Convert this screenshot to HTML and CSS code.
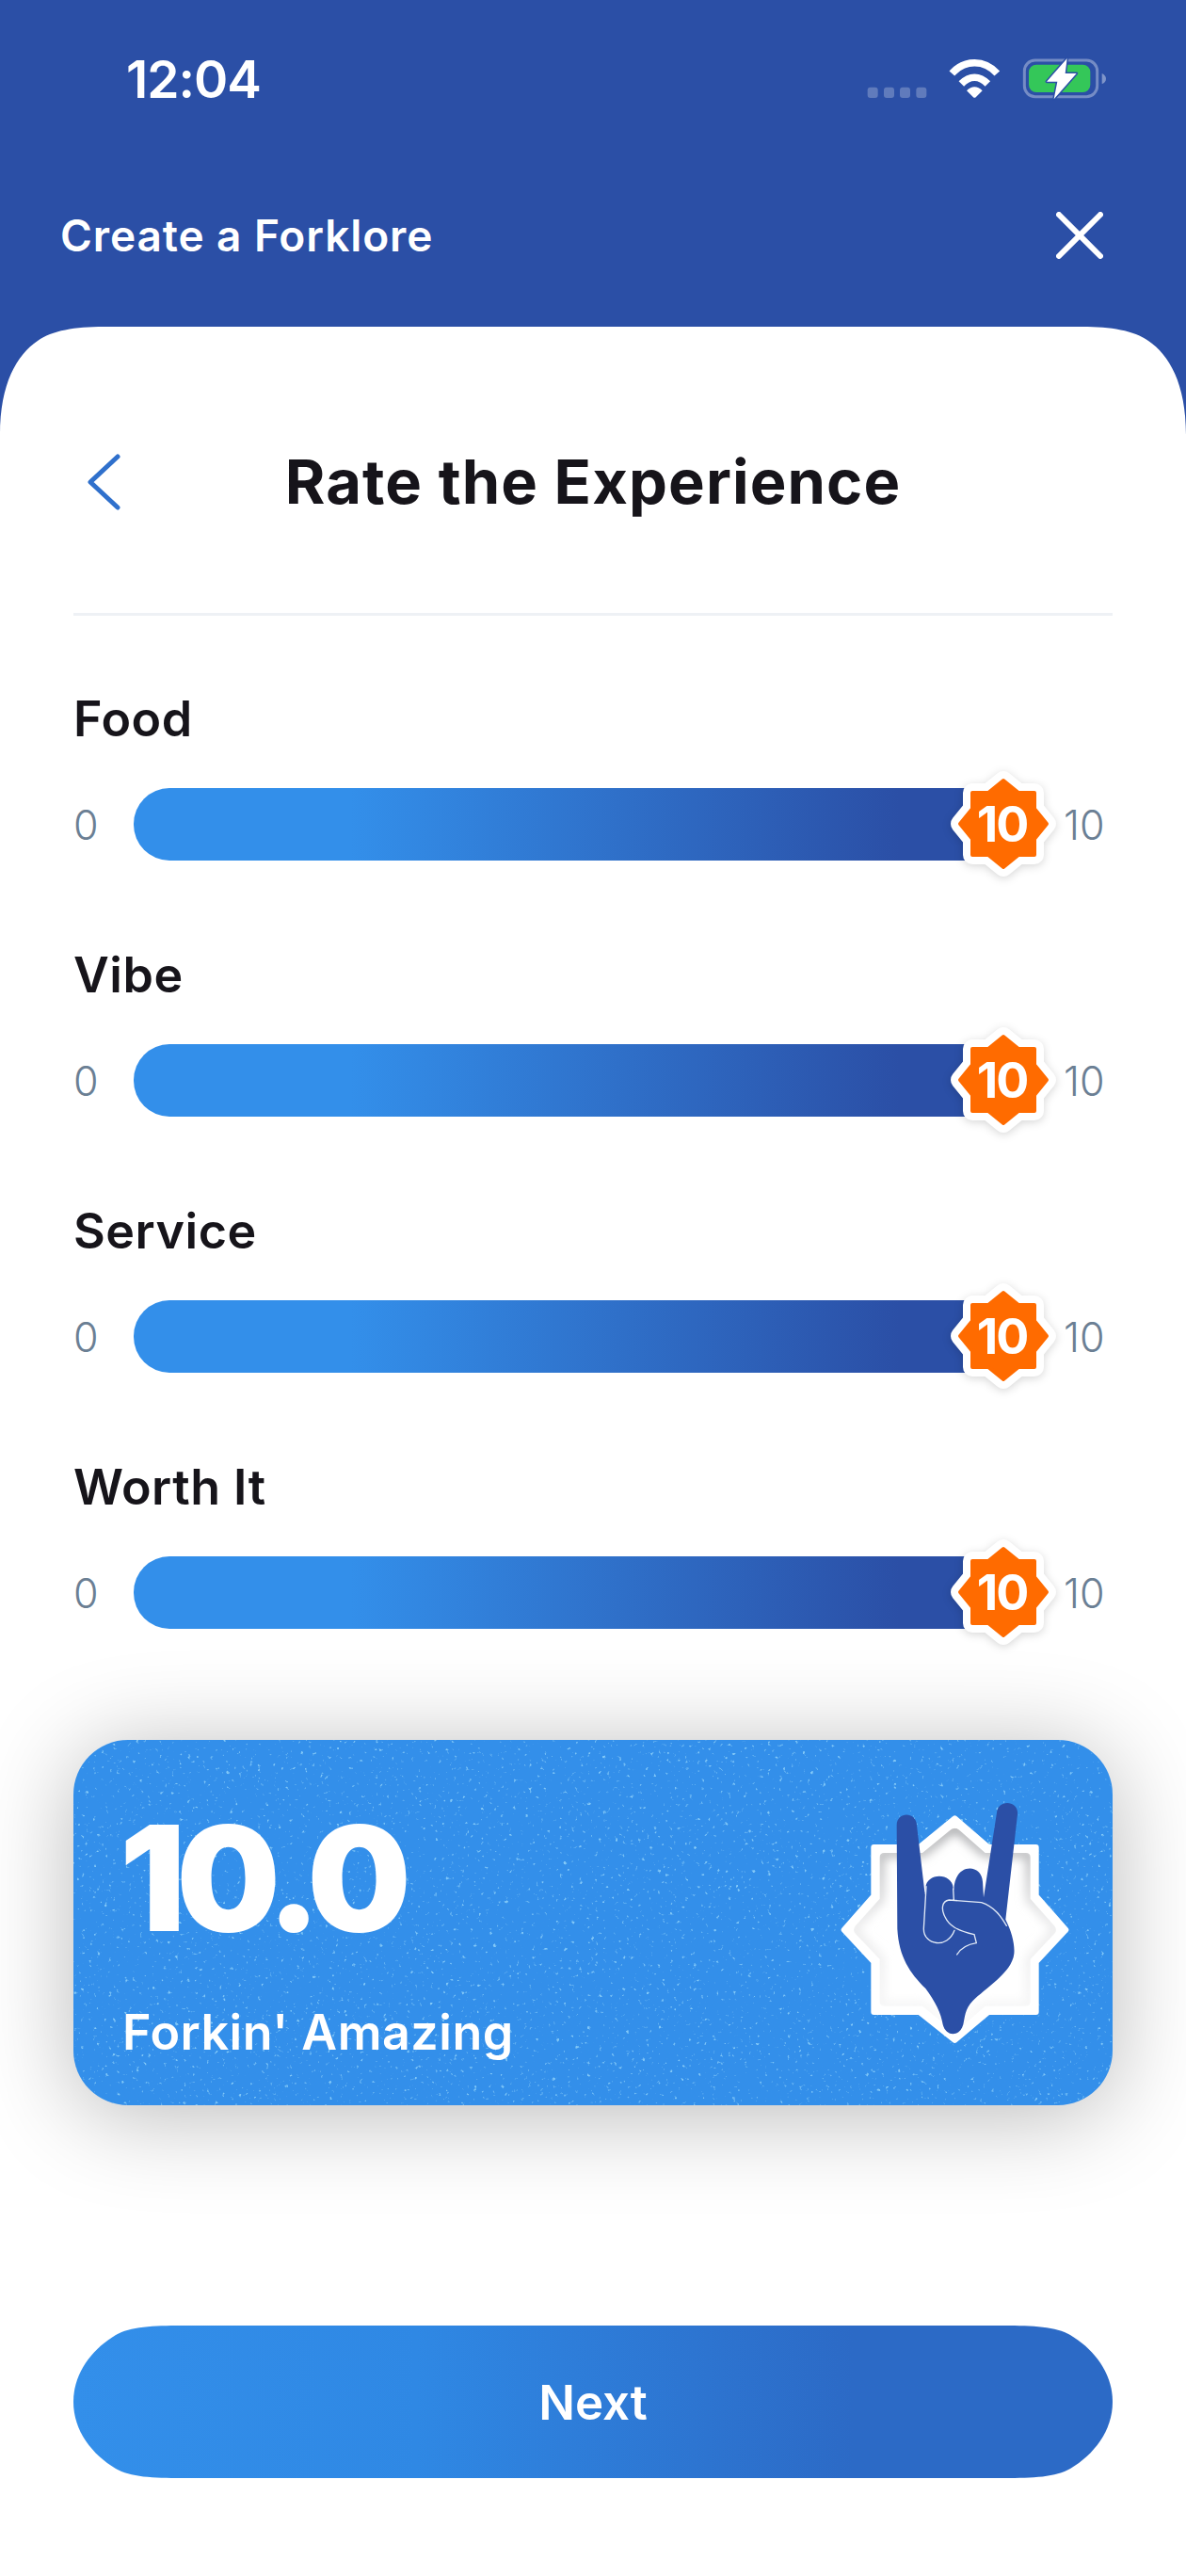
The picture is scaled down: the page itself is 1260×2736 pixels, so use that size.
FILE: index.html
```html
<!DOCTYPE html>
<html lang="en">
<head>
    <meta charset="UTF-8">
    <meta name="viewport" content="width=device-width, initial-scale=1.0">
    <title>Create a Forklore</title>
    <link rel="stylesheet" href="styles.css">
</head>
<body>
    <svg class="defs" width="0" height="0">
        <defs>
            <symbol id="badge" viewBox="0 0 120 120">
                <polygon class="badge-edge" points="60,14 76,27 93,27 93,44 106,60 93,76 93,93 76,93 60,106 44,93 27,93 27,76 14,60 27,44 27,27 44,27"/>
                <polygon class="badge-fill" points="60,14 76,27 93,27 93,44 106,60 93,76 93,93 76,93 60,106 44,93 27,93 27,76 14,60 27,44 27,27 44,27"/>
            </symbol>
        </defs>
    </svg>
    <div class="screen">
        <header class="top">
            <div class="status">
                <span class="time">12:04</span>
                <svg class="status-icons" width="340" height="100" viewBox="0 0 1020 300">
                    <g fill="#fff" fill-opacity=".25">
                        <rect x="185" y="128" width="33" height="34" rx="9"/>
                        <rect x="237" y="128" width="33" height="34" rx="9"/>
                        <rect x="288" y="128" width="33" height="34" rx="9"/>
                        <rect x="340" y="128" width="33" height="34" rx="9"/>
                    </g>
                    <g fill="none" stroke="#fff" stroke-width="23">
                        <path d="M454 84C495 39 557 39 598 84"/>
                        <path d="M484 117C510 90 542 90 568 117"/>
                    </g>
                    <path fill="#fff" d="M501 139C517 123 535 123 551 139L530 160Q526 163 522 160Z"/>
                    <rect x="685" y="42" width="232" height="116" rx="34" fill="none" stroke="#fff" stroke-opacity=".35" stroke-width="9"/>
                    <path d="M932 84Q945 90 945 101Q945 112 932 118Z" fill="#fff" fill-opacity=".4"/>
                    <rect x="699" y="56" width="196" height="88" rx="24" fill="#34c759"/>
                    <path d="M821 36L756 110H790L779 166L851 84H815Z" fill="#fff" stroke="#2b4fa6" stroke-width="9" stroke-linejoin="round" paint-order="stroke"/>
                </svg>
            </div>
            <div class="top-bar">
                <span class="top-title">Create a Forklore</span>
                <svg class="close" width="50" height="50" viewBox="0 0 50 50">
                    <path d="M3 3L47 47M47 3L3 47"/>
                </svg>
            </div>
        </header>

        <main class="sheet">
            <div class="sheet-head">
                <svg class="back" width="38" height="60" viewBox="0 0 38 60">
                    <path d="M33 3L4 30L33 57"/>
                </svg>
                <h1>Rate the Experience</h1>
            </div>

            <section class="rating">
                <div class="rating-name">Food</div>
                <div class="slider">
                    <span class="limit">0</span>
                    <div class="track">
                        <div class="thumb"><svg width="120" height="120"><use href="#badge"/></svg><span>10</span></div>
                    </div>
                    <span class="limit max">10</span>
                </div>
            </section>
            <section class="rating">
                <div class="rating-name">Vibe</div>
                <div class="slider">
                    <span class="limit">0</span>
                    <div class="track">
                        <div class="thumb"><svg width="120" height="120"><use href="#badge"/></svg><span>10</span></div>
                    </div>
                    <span class="limit max">10</span>
                </div>
            </section>
            <section class="rating">
                <div class="rating-name">Service</div>
                <div class="slider">
                    <span class="limit">0</span>
                    <div class="track">
                        <div class="thumb"><svg width="120" height="120"><use href="#badge"/></svg><span>10</span></div>
                    </div>
                    <span class="limit max">10</span>
                </div>
            </section>
            <section class="rating">
                <div class="rating-name">Worth It</div>
                <div class="slider">
                    <span class="limit">0</span>
                    <div class="track">
                        <div class="thumb"><svg width="120" height="120"><use href="#badge"/></svg><span>10</span></div>
                    </div>
                    <span class="limit max">10</span>
                </div>
            </section>

            <section class="score">
                <svg class="specks" width="100%" height="100%">
                    <filter id="speckle" x="0" y="0" width="100%" height="100%" color-interpolation-filters="sRGB">
                        <feTurbulence type="fractalNoise" baseFrequency=".24" numOctaves="2" seed="7"/>
                        <feColorMatrix type="matrix" values="0 0 0 0 .5  0 0 0 0 .78  0 0 0 0 .97  7 0 0 0 -4.7"/>
                        <feGaussianBlur stdDeviation=".7"/>
                    </filter>
                    <rect width="100%" height="100%" filter="url(#speckle)"/>
                </svg>
                <div class="score-text">
                    <div class="score-value">10.0</div>
                    <div class="score-label">Forkin' Amazing</div>
                </div>
                <svg class="score-icon" width="320" height="320" viewBox="0 0 960 960">
                    <defs>
                        <linearGradient id="dent" x1="0" y1="0" x2="0" y2="1">
                            <stop offset="0" stop-color="#999a9d"/>
                            <stop offset=".45" stop-color="#e4e4e5"/>
                            <stop offset="1" stop-color="#f8f8f8"/>
                        </linearGradient>
                        <filter id="soft" x="-20%" y="-20%" width="140%" height="140%">
                            <feGaussianBlur stdDeviation="16"/>
                        </filter>
                        <clipPath id="dent-clip">
                            <path d="M445 188Q463 170 481 188L560 258H690Q704 258 704 272V404L780 490Q792 503 780 516L704 597V732Q704 746 690 746H560L481 815Q463 832 445 815L360 746H238Q224 746 224 732V597L147 516Q135 503 147 490L224 404V272Q224 258 238 258H360Z"/>
                        </clipPath>
                    </defs>
                    <polygon class="star-rim" points="463,148 570,240 722,240 722,395 817,503 722,605 722,765 570,765 463,855 350,765 205,765 205,605 110,503 205,395 205,240 350,240"/>
                    <g clip-path="url(#dent-clip)">
                        <path class="dent-shade" filter="url(#soft)" d="M445 188Q463 170 481 188L560 258H690Q704 258 704 272V404L780 490Q792 503 780 516L704 597V732Q704 746 690 746H560L481 815Q463 832 445 815L360 746H238Q224 746 224 732V597L147 516Q135 503 147 490L224 404V272Q224 258 238 258H360Z"/>
                    </g>
                    <path class="hand" d="M278 170C278 125 340 125 342 170L368 390L370 370C372 320 455 320 458 370L460 375C462 290 548 290 552 350L555 400L597 130C600 85 668 90 663 135L625 470C645 510 655 550 652 580C645 640 560 690 520 730C495 755 495 785 490 805C480 845 435 845 425 805C420 770 400 730 370 690C320 640 285 590 280 500Z"/>
                    <path class="hand-line" d="M372 365L364 500C364 552 440 565 462 505M458 372L460 408M548 416L445 408C420 412 420 440 432 462C445 490 470 505 525 518L532 545C500 550 480 565 470 582M548 416C590 430 610 460 628 490"/>
                </svg>
            </section>

            <button class="next">Next</button>
        </main>
    </div>
</body>
</html>
```

FILE: styles.css
```css
* {
    box-sizing: border-box;
}
body {
    margin: 0;
    font-family: Inter, "Liberation Sans", sans-serif;
    background-color: #fff;
}
.defs {
    position: absolute;
}
.screen {
    width: 1260px;
    height: 2736px;
    overflow: hidden;
    background-color: #2b4fa6;
    display: flex;
    flex-direction: column;
}
.top {
    height: 347px;
    color: white;
}
.status {
    height: 150px;
    padding: 50px 60px 0 134px;
    display: flex;
    justify-content: space-between;
    align-items: flex-start;
}
.time {
    font-size: 55px;
    line-height: 68px;
    font-weight: 600;
    letter-spacing: -1px;
}
.status-icons {
    flex: none;
}
.top-bar {
    margin-top: 78px;
    padding: 0 88px 0 64px;
    height: 44px;
    display: flex;
    justify-content: space-between;
    align-items: center;
}
.top-title {
    font-size: 46px;
    font-weight: 600;
    letter-spacing: .9px;
}
.close path {
    fill: none;
    stroke: white;
    stroke-width: 6;
    stroke-linecap: round;
}
.sheet {
    flex: 1;
    background-color: white;
    clip-path: path("M0 115C0 60 18 30 40 15C55 4 80 0 110 0H1150C1180 0 1205 4 1220 15C1242 30 1260 60 1260 115V2389H0Z");
    padding: 0 78px;
    display: flex;
    flex-direction: column;
}
.sheet-head {
    height: 307px;
    padding-top: 125px;
    border-bottom: 3px solid #eef1f5;
    margin-bottom: 85px;
    display: flex;
    justify-content: center;
    align-items: flex-start;
    position: relative;
}
.sheet-head h1 {
    margin: 0;
    font-size: 65px;
    line-height: 80px;
    font-weight: 700;
    color: #16141a;
    letter-spacing: 1.1px;
}
.back {
    position: absolute;
    left: 14px;
    top: 135px;
}
.back path {
    fill: none;
    stroke: #2f70cc;
    stroke-width: 5;
    stroke-linecap: round;
    stroke-linejoin: round;
}
.rating {
    height: 272px;
}
.rating-name {
    font-size: 52px;
    line-height: 50px;
    font-weight: 600;
    color: #16141a;
    letter-spacing: .5px;
}
.slider {
    margin-top: 48px;
    display: flex;
    align-items: center;
}
.limit {
    width: 64px;
    font-size: 43px;
    font-weight: 300;
    color: #6b7f94;
}
.limit.max {
    width: 52px;
    margin-left: 64px;
}
.track {
    flex: 1;
    height: 77px;
    position: relative;
    border-radius: 38px 0 0 38px;
    background: linear-gradient(90deg, #338fea 0%, #338fea 25%, #2b4fa6 88%);
}
.thumb {
    position: absolute;
    right: -60px;
    top: -22px;
    width: 120px;
    height: 120px;
    display: flex;
    justify-content: center;
    align-items: center;
    filter: drop-shadow(0 2px 5px rgba(0, 0, 0, 0.16));
}
.thumb svg {
    position: absolute;
    left: 0;
    top: 0;
}
.thumb span {
    position: relative;
    margin-left: -3px;
    font-size: 52px;
    font-weight: 700;
    color: white;
    letter-spacing: -2px;
}
.badge-edge {
    fill: white;
    stroke: white;
    stroke-width: 20;
    stroke-linejoin: round;
}
.badge-fill {
    fill: #ff6b00;
    stroke: #ff6b00;
    stroke-width: 4;
    stroke-linejoin: round;
}
.score {
    margin-top: 21px;
    height: 388px;
    flex: none;
    position: relative;
    background-color: #338fea;
    border-radius: 58px;
    padding: 0 2px 0 49px;
    display: flex;
    justify-content: space-between;
    align-items: center;
    box-shadow: 0 10px 100px rgba(0, 0, 0, 0.28);
    color: white;
}
.specks {
    position: absolute;
    left: 0;
    top: 0;
    border-radius: 58px;
}
.score-text {
    position: relative;
    padding-top: 20px;
}
.score-value {
    font-size: 155px;
    line-height: 158px;
    font-weight: 900;
    letter-spacing: -9.5px;
}
.score-label {
    margin-top: 55px;
    margin-left: 3px;
    font-size: 52px;
    line-height: 60px;
    font-weight: 600;
    letter-spacing: .5px;
}
.score-icon {
    position: relative;
    flex: none;
}
.star-rim {
    fill: white;
    stroke: white;
    stroke-width: 18;
    stroke-linejoin: round;
}
.dent-shade {
    fill: none;
    stroke: url(#dent);
    stroke-width: 26;
}
.hand {
    fill: #2b4fa6;
}
.hand-line {
    fill: none;
    stroke: #e3ebf7;
    stroke-width: 4;
    stroke-linecap: round;
}
.next {
    margin-top: 234px;
    height: 162px;
    flex: none;
    border: none;
    clip-path: path("M115 0C85 0 60 1 45 10C20 25 0 50 0 81C0 112 20 137 45 152C60 161 85 162 115 162H989C1019 162 1044 161 1059 152C1084 137 1104 112 1104 81C1104 50 1084 25 1059 10C1044 1 1019 0 989 0Z");
    background: linear-gradient(90deg, #338fea 0%, #2f88e4 33%, #2c6ac6 75%);
    color: white;
    font-family: inherit;
    font-size: 51px;
    font-weight: 600;
}
```
